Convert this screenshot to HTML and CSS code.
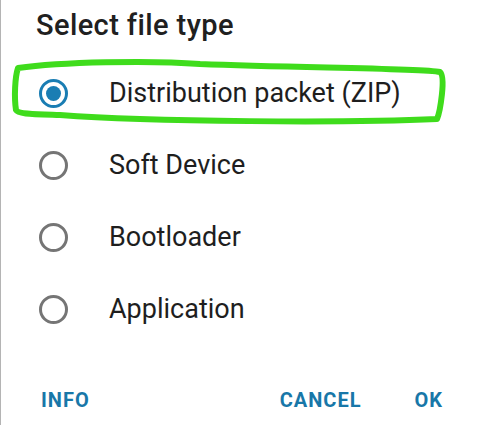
FILE: index.html
```html
<!DOCTYPE html>
<html lang="en">
<head>
<meta charset="utf-8">
<title>Select file type</title>
<link rel="stylesheet" href="styles.css">
</head>
<body>
<div class="dialog">
  <h1 class="title">Select file type</h1>
  <ul class="options">
    <li class="option">
      <span class="radio checked"></span>
      <span class="label">Distribution packet (ZIP)</span>
      <svg class="mark" width="460" height="80" viewBox="0 0 460 80" aria-hidden="true">
        <path d="M 18 11 C 60 5, 150 3, 200 7 C 300 11, 420 11, 440 15 C 446 20, 440 55, 437 62 C 350 66, 150 65, 60 58 C 30 57, 18 57, 16 53 C 14 40, 15 20, 18 11 Z" fill="none" stroke="#3fdc1c" stroke-width="6" stroke-linejoin="round" stroke-linecap="round"/>
      </svg>
    </li>
    <li class="option">
      <span class="radio"></span>
      <span class="label">Soft Device</span>
    </li>
    <li class="option">
      <span class="radio"></span>
      <span class="label">Bootloader</span>
    </li>
    <li class="option">
      <span class="radio"></span>
      <span class="label">Application</span>
    </li>
  </ul>
  <div class="actions">
    <button class="btn">INFO</button>
    <div class="right">
      <button class="btn">CANCEL</button>
      <button class="btn">OK</button>
    </div>
  </div>
</div>
</body>
</html>
```
FILE: styles.css
```css
html, body {
  margin: 0;
  padding: 0;
  background: #ffffff;
}
body {
  width: 490px;
  height: 425px;
  overflow: hidden;
  font-family: Roboto, "Liberation Sans", sans-serif;
}
.dialog {
  box-sizing: border-box;
  height: 425px;
  border-left: 1px solid #b4b4b4;
  padding-top: 7px;
}
.title {
  margin: 0 0 14px 0;
  padding-left: 35px;
  font-size: 29px;
  line-height: 36px;
  letter-spacing: 0.4px;
  font-weight: 500;
  color: #202020;
}
.options {
  list-style: none;
  margin: 0;
  padding: 0;
}
.option {
  position: relative;
  display: flex;
  align-items: center;
  height: 72px;
  padding-left: 38px;
}
.radio {
  box-sizing: border-box;
  width: 29px;
  height: 29px;
  border: 3px solid #757575;
  border-radius: 50%;
  display: flex;
  align-items: center;
  justify-content: center;
  flex-shrink: 0;
}
.radio.checked {
  border-color: #1a7db3;
}
.radio.checked::after {
  content: "";
  width: 15px;
  height: 15px;
  border-radius: 50%;
  background: #1a7db3;
}
.label {
  margin-left: 41px;
  font-size: 27px;
  color: #1e1e1e;
}
.mark {
  position: absolute;
  left: -1px;
  top: 0;
  pointer-events: none;
}
.actions {
  display: flex;
  justify-content: space-between;
  align-items: center;
  margin-top: 35px;
  padding: 0 47px 0 40px;
}
.right {
  display: flex;
  gap: 53px;
}
.btn {
  border: 0;
  background: none;
  padding: 0;
  font-family: Roboto, "Liberation Sans", sans-serif;
  font-size: 20px;
  line-height: 40px;
  letter-spacing: 1px;
  font-weight: 700;
  color: #1877a8;
}
```
